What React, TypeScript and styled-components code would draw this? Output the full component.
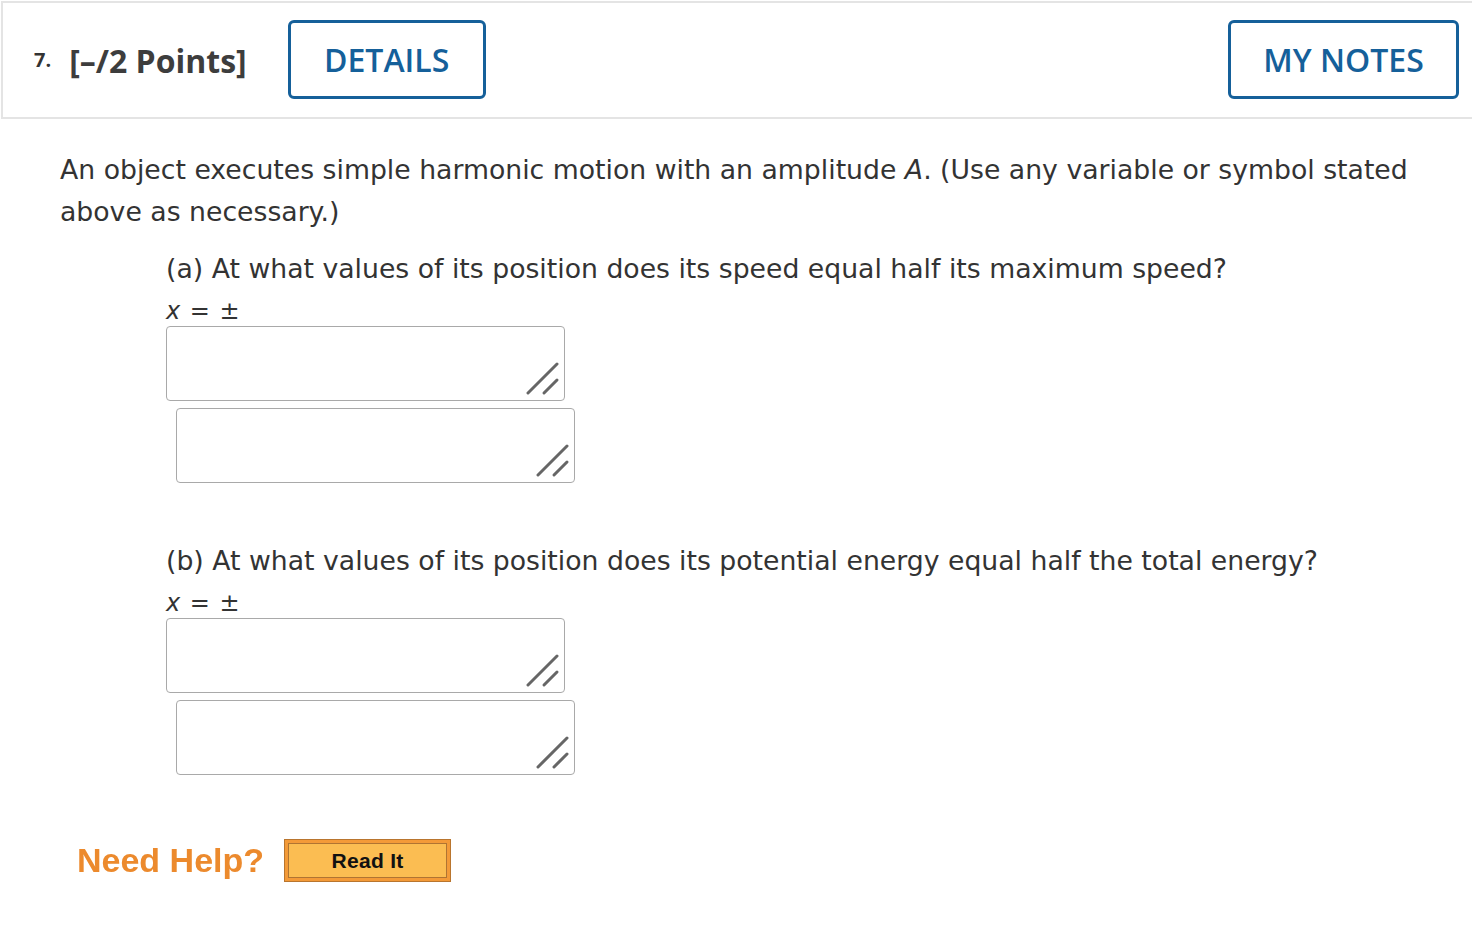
import React from 'react'
import styled, { createGlobalStyle } from 'styled-components'

const GlobalStyle = createGlobalStyle`
    html, body {
        margin: 0;
        padding: 0;
        background: #fff;
    }
    body {
        font-family: "DejaVu Sans", Verdana, sans-serif;
        color: #333;
    }
`;

const Page = styled.div`
    width: 1472px;
    height: 936px;
    overflow: hidden;
    padding-top: 1px;
    box-sizing: border-box;
`;

const Header = styled.header`
    display: flex;
    align-items: center;
    height: 118px;
    margin-left: 1px;
    margin-right: -4px;
    padding: 0 17px 0 31px;
    border: 2px solid #e4e4e4;
    border-right: none;
    box-sizing: border-box;
    font-family: "Open Sans", sans-serif;
`;

const Number = styled.span`
    font-size: 20px;
    font-weight: 700;
    color: #333;
    margin-right: 18px;
    margin-top: -2px;
`;

const Points = styled.span`
    font-size: 32px;
    font-weight: 700;
    color: #3d3d3d;
    margin-right: 41px;
`;

const OutlineButton = styled.button<{ $width: number }>`
    width: ${p => p.$width}px;
    height: 79px;
    border: 3px solid #15609a;
    border-radius: 6px;
    background: #fff;
    color: #15609a;
    font-family: "Open Sans", sans-serif;
    font-size: 32px;
    font-weight: 600;
    padding: 0;
    margin-top: -1px;
    cursor: pointer;
`;

const Spacer = styled.div`
    flex: 1;
`;

const Body = styled.section`
    padding: 30px 0 0 60px;
`;

const Intro = styled.p`
    margin: 0;
    font-size: 26.7px;
    line-height: 42px;
    width: 1390px;
    color: #333;
`;

const Part = styled.div`
    padding-left: 106px;
`;

const Question = styled.p<{ $top: number }>`
    margin: ${p => p.$top}px 0 0;
    font-size: 26.7px;
    line-height: 42px;
`;

const Equation = styled.div`
    margin-top: 6px;
    font-size: 24px;
    line-height: 30px;
    height: 30px;
    letter-spacing: 1px;
`;

const Var = styled.i`
    font-style: italic;
`;

const Box = styled.div<{ $shift: number, $top: number }>`
    position: relative;
    width: 399px;
    height: 75px;
    margin: ${p => p.$top}px 0 0 ${p => p.$shift}px;
    border: 1px solid #a9a9a9;
    border-radius: 4px;
    box-sizing: border-box;
    background: #fff;
`;

const Grip = styled.svg`
    position: absolute;
    right: 4px;
    bottom: 4px;
`;

const Help = styled.div`
    display: flex;
    align-items: center;
    margin: 64px 0 0 17px;
`;

const HelpText = styled.span`
    font-family: "Liberation Sans", Arial, sans-serif;
    font-size: 34px;
    font-weight: 700;
    color: #ec8a2d;
    margin-right: 20px;
    filter: blur(0.4px);
`;

const ReadIt = styled.button`
    width: 167px;
    height: 43px;
    padding: 3px;
    background: #f39a38;
    border: 1px solid #b9752e;
    box-sizing: border-box;
    cursor: pointer;
`;

const ReadItInner = styled.span`
    display: flex;
    align-items: center;
    justify-content: center;
    height: 100%;
    background: #fbbd52;
    border: 1px solid #b07432;
    box-sizing: border-box;
    font-family: "Liberation Sans", Arial, sans-serif;
    font-size: 21px;
    font-weight: 700;
    color: #111;
    letter-spacing: 0.3px;
`;

const ResizeGrip = () => (
    <Grip width="34" height="34" viewBox="0 0 34 34">
        <line x1="2" y1="31" x2="31" y2="2" stroke="#666" strokeWidth="3" strokeLinecap="round" />
        <line x1="18" y1="31" x2="31" y2="18" stroke="#666" strokeWidth="3" strokeLinecap="round" />
    </Grip>
);

const AnswerBox = ({ shift, top }: { shift: number, top: number }) => (
    <Box $shift={shift} $top={top}>
        <ResizeGrip />
    </Box>
);

const AnswerPart = ({ question, top }: { question: string, top: number }) => (
    <Part>
        <Question $top={top}>{question}</Question>
        <Equation><Var>x</Var> = ±</Equation>
        <AnswerBox shift={0} top={0} />
        <AnswerBox shift={10} top={7} />
    </Part>
);

const App = () => {
    return (
        <Page>
            <GlobalStyle />
            <Header>
                <Number>7.</Number>
                <Points>[–/2 Points]</Points>
                <OutlineButton $width={198}>DETAILS</OutlineButton>
                <Spacer />
                <OutlineButton $width={231}>MY NOTES</OutlineButton>
            </Header>
            <Body>
                <Intro>
                    An object executes simple harmonic motion with an amplitude <Var>A</Var>. (Use any variable or symbol stated above as necessary.)
                </Intro>
                <AnswerPart top={15} question="(a) At what values of its position does its speed equal half its maximum speed?" />
                <AnswerPart top={57} question="(b) At what values of its position does its potential energy equal half the total energy?" />
                <Help>
                    <HelpText>Need Help?</HelpText>
                    <ReadIt>
                        <ReadItInner>Read It</ReadItInner>
                    </ReadIt>
                </Help>
            </Body>
        </Page>
    )
}

export default App
